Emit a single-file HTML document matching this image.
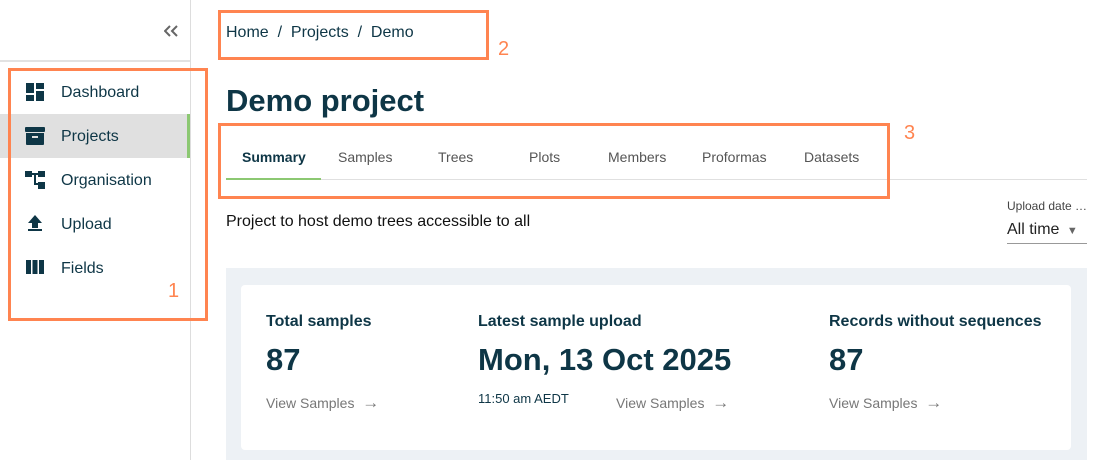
<!DOCTYPE html>
<html><head><meta charset="utf-8"><style>
*{margin:0;padding:0;box-sizing:border-box}
body{width:1107px;height:460px;background:#fff;font-family:"Liberation Sans",sans-serif;color:#0e3646;position:relative;overflow:hidden}
.a{position:absolute;white-space:nowrap;transform-origin:left center}
.box{position:absolute;border:3px solid #ff8450}
.lbl{position:absolute;color:#ff8450;font-size:20px}
.nav{position:absolute;left:61px;font-size:16px}
.tab{position:absolute;top:149px;font-size:14px;color:#555}
.grey{color:#777}
</style></head><body>
<div style="position:absolute;left:0;top:0;width:191px;height:460px;border-right:1px solid #ddd"></div>
<div style="position:absolute;left:0;top:60px;width:190px;height:2px;background:#e2e2e2"></div>
<svg style="position:absolute;left:164px;top:25px" width="14" height="12" viewBox="0 0 14 12" fill="none" stroke="#666" stroke-width="2"><path d="M6 1L1 6l5 5M13 1L8 6l5 5"/></svg>
<div style="position:absolute;left:0;top:114px;width:190px;height:44px;background:#e0e0e0"></div>
<div style="position:absolute;left:187px;top:114px;width:3px;height:44px;background:#8cc872"></div>
<svg style="position:absolute;left:26px;top:83px" width="18" height="18" viewBox="0 0 18 18" fill="#0e3646"><rect x="0" y="0" width="8" height="10"/><rect x="10" y="0" width="8" height="6"/><rect x="0" y="12" width="8" height="6"/><rect x="10" y="8" width="8" height="10"/></svg>
<svg style="position:absolute;left:25px;top:127px" width="20" height="18" viewBox="0 0 20 18" fill="#0e3646"><rect x="0" y="0" width="20" height="5" rx="1"/><path d="M1 6h18v11a1 1 0 0 1-1 1H2a1 1 0 0 1-1-1z"/><rect x="7" y="9" width="6" height="2" fill="#e0e0e0"/></svg>
<svg style="position:absolute;left:25px;top:171px" width="20" height="18" viewBox="0 0 20 18" fill="#0e3646"><rect x="0" y="0" width="7" height="6"/><rect x="13" y="0" width="7" height="6"/><rect x="13" y="11" width="7" height="7"/><rect x="7" y="2" width="6" height="2"/><rect x="9" y="3" width="2" height="11"/><rect x="9" y="12" width="5" height="2"/></svg>
<svg style="position:absolute;left:26px;top:214px" width="18" height="18" viewBox="0 0 18 18" fill="#0e3646"><path d="M9 1L2 9h4v5h6V9h4z"/><rect x="2" y="15" width="14" height="2"/></svg>
<svg style="position:absolute;left:26px;top:260px" width="18" height="14" viewBox="0 0 18 14" fill="#0e3646"><rect x="0" y="0" width="5" height="14"/><rect x="6.5" y="0" width="5" height="14"/><rect x="13" y="0" width="5" height="14"/></svg>
<div class="nav" style="top:84px">Dashboard</div>
<div class="nav" style="top:128px">Projects</div>
<div class="nav" style="top:172px">Organisation</div>
<div class="nav" style="top:216px">Upload</div>
<div class="nav" style="top:260px">Fields</div>
<div class="box" style="left:8px;top:68px;width:200px;height:253px"></div>
<div class="lbl" style="left:168px;top:280px">1</div>

<div class="a" style="left:226px;top:24px;font-size:16px">Home &nbsp;/&nbsp; Projects &nbsp;/&nbsp; Demo</div>
<div class="box" style="left:218px;top:10px;width:271px;height:50px"></div>
<div class="lbl" style="left:498px;top:38px">2</div>
<div class="a" style="left:226px;top:83px;font-size:31px;font-weight:bold">Demo project</div>

<div class="tab" style="left:242px;color:#0e3646;font-weight:bold">Summary</div>
<div class="tab" style="left:338px">Samples</div>
<div class="tab" style="left:438px">Trees</div>
<div class="tab" style="left:529px">Plots</div>
<div class="tab" style="left:608px">Members</div>
<div class="tab" style="left:702px">Proformas</div>
<div class="tab" style="left:804px">Datasets</div>
<div style="position:absolute;left:226px;top:179px;width:861px;height:1px;background:#e0e0e0"></div>
<div style="position:absolute;left:226px;top:178px;width:95px;height:2px;background:#8cc872"></div>
<div class="box" style="left:218px;top:123px;width:672px;height:76px"></div>
<div class="lbl" style="left:904px;top:122px">3</div>

<div class="a" style="left:226px;top:213px;font-size:16px;color:#111">Project to host demo trees accessible to all</div>
<div class="a" style="left:1007px;top:199px;font-size:12px;color:#444">Upload date …</div>
<div class="a" style="left:1007px;top:221px;font-size:16px;color:#222">All time <span style="font-size:11px;color:#666;margin-left:3px">▼</span></div>
<div style="position:absolute;left:1007px;top:243px;width:80px;height:1px;background:#999"></div>

<div style="position:absolute;left:226px;top:268px;width:861px;height:192px;background:#edf1f5"></div>
<div style="position:absolute;left:241px;top:285px;width:830px;height:165px;background:#fff;border-radius:4px"></div>
<div class="a" style="left:266px;top:313px;font-size:16px;font-weight:bold">Total samples</div>
<div class="a" style="left:266px;top:342px;font-size:31px;font-weight:bold">87</div>
<div class="a grey" style="left:266px;top:393px;font-size:14px">View Samples &nbsp;<span style="font-size:17px">→</span></div>
<div class="a" style="left:478px;top:313px;font-size:16px;font-weight:bold">Latest sample upload</div>
<div class="a" style="left:478px;top:342px;font-size:31px;font-weight:bold">Mon, 13 Oct 2025</div>
<div class="a" style="left:478px;top:391px;font-size:13px">11:50 am AEDT</div>
<div class="a grey" style="left:616px;top:393px;font-size:14px">View Samples &nbsp;<span style="font-size:17px">→</span></div>
<div class="a" style="left:829px;top:313px;font-size:16px;font-weight:bold">Records without sequences</div>
<div class="a" style="left:829px;top:342px;font-size:31px;font-weight:bold">87</div>
<div class="a grey" style="left:829px;top:393px;font-size:14px">View Samples &nbsp;<span style="font-size:17px">→</span></div>
</body></html>
